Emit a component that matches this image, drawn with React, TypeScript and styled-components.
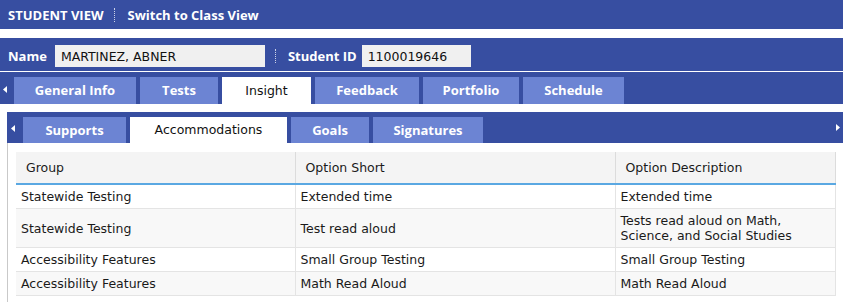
import React from 'react';
import styled, { createGlobalStyle } from 'styled-components';

const BLUE = '#374ea1';
const TAB = '#6c84d3';

const Global = createGlobalStyle`
  html, body { margin: 0; padding: 0; background: #fff; }
  body { font-family: 'DejaVu Sans', 'Noto Sans', sans-serif; font-size: 12.5px; color: #1a1a1a; }
  * { box-sizing: border-box; }
`;

const Page = styled.div`
  width: 843px;
  display: flex;
  flex-direction: column;
`;

const TopBar = styled.div`
  height: 29px;
  background: ${BLUE};
  display: flex;
  align-items: center;
  padding: 0 8px;
  color: #fff;
`;

const BarText = styled.span`
  font-family: 'Open Sans', 'DejaVu Sans', sans-serif;
  font-weight: 700;
  font-size: 13px;
  color: #fff;
  white-space: nowrap;
`;

const Dots = styled.span<{ $l: number; $r: number }>`
  display: block;
  height: 14px;
  border-left: 1px dotted rgba(255, 255, 255, 0.75);
  margin: 0 ${(p) => p.$r}px 0 ${(p) => p.$l}px;
`;

const StudentBar = styled.div`
  margin-top: 9px;
  height: 33px;
  background: ${BLUE};
  display: flex;
  align-items: center;
  padding: 3px 0 0 8px;
`;

const Field = styled.div<{ $w: number; $ml: number }>`
  width: ${(p) => p.$w}px;
  height: 22px;
  margin-left: ${(p) => p.$ml}px;
  background: #f0f0f0;
  color: #111;
  display: flex;
  align-items: center;
  padding-left: 6px;
  font-size: 12.5px;
  white-space: nowrap;
`;

const TabBar = styled.div`
  margin-top: 1px;
  height: 32px;
  background: ${BLUE};
  display: flex;
  align-items: flex-end;
  gap: 4px;
`;

const ArrowCell = styled.div<{ $w: number; $right?: boolean }>`
  width: ${(p) => p.$w}px;
  align-self: stretch;
  display: flex;
  align-items: center;
  justify-content: ${(p) => (p.$right ? 'flex-start' : 'center')};
  margin-left: ${(p) => (p.$right ? 'auto' : '0')};
  padding-top: ${(p) => (p.$right ? '0' : '2px')};
`;

const Tab = styled.div<{ $w: number; $active?: boolean; $h: number }>`
  width: ${(p) => p.$w}px;
  height: ${(p) => p.$h}px;
  background: ${(p) => (p.$active ? '#fff' : TAB)};
  color: ${(p) => (p.$active ? '#111' : '#fff')};
  font-family: ${(p) =>
    p.$active ? "'DejaVu Sans', sans-serif" : "'Open Sans', 'DejaVu Sans', sans-serif"};
  font-weight: ${(p) => (p.$active ? 400 : 700)};
  font-size: ${(p) => (p.$active ? '12.5px' : '13px')};
  display: flex;
  align-items: center;
  justify-content: center;
  white-space: nowrap;
  padding-bottom: 1px;
`;

const Panel = styled.div`
  margin: 8px 0 0 7px;
  display: flex;
  flex-direction: column;
`;

const SubBar = styled.div`
  height: 31px;
  background: ${BLUE};
  display: flex;
  align-items: flex-end;
  gap: 4px;
`;

const Content = styled.div`
  border-left: 1px solid #c9c9c9;
  padding: 9px 8px 8px 8px;
`;

const Table = styled.table`
  width: 819px;
  border-collapse: collapse;
  table-layout: fixed;
`;

const Th = styled.th`
  height: 32px;
  background: #f4f4f4;
  border-right: 1px solid #dcdcdc;
  border-bottom: 2px solid #5aa8e2;
  text-align: left;
  font-weight: 400;
  padding: 0 10px;
  color: #1a1a1a;
`;

const Tr = styled.tr<{ $alt?: boolean }>`
  background: ${(p) => (p.$alt ? '#f8f8f8' : '#fff')};
`;

const Td = styled.td`
  border-right: 1px solid #e4e4e4;
  border-bottom: 1px solid #e4e4e4;
  padding: 4px 5px 4px 5px;
  line-height: 15px;
  vertical-align: middle;
  color: #1a1a1a;
`;

const Tri = ({ dir }: { dir: 'l' | 'r' }) => (
  <svg width="4" height="7" viewBox="0 0 4 7">
    {dir === 'l' ? <path d="M4 0 L0 3.5 L4 7 Z" fill="#fff" /> : <path d="M0 0 L4 3.5 L0 7 Z" fill="#fff" />}
  </svg>
);

const mainTabs = [
  { label: 'General Info', w: 122 },
  { label: 'Tests', w: 78 },
  { label: 'Insight', w: 89, active: true },
  { label: 'Feedback', w: 104 },
  { label: 'Portfolio', w: 96 },
  { label: 'Schedule', w: 101 },
];

const subTabs = [
  { label: 'Supports', w: 103 },
  { label: 'Accommodations', w: 157, active: true },
  { label: 'Goals', w: 78 },
  { label: 'Signatures', w: 110 },
];

const rows = [
  ['Statewide Testing', 'Extended time', 'Extended time'],
  ['Statewide Testing', 'Test read aloud', 'Tests read aloud on Math, Science, and Social Studies'],
  ['Accessibility Features', 'Small Group Testing', 'Small Group Testing'],
  ['Accessibility Features', 'Math Read Aloud', 'Math Read Aloud'],
];

export default function App() {
  return (
    <Page>
      <Global />
      <TopBar>
        <BarText>STUDENT VIEW</BarText>
        <Dots $l={10} $r={13} />
        <BarText>Switch to Class View</BarText>
      </TopBar>
      <StudentBar>
        <BarText>Name</BarText>
        <Field $w={210} $ml={8}>MARTINEZ, ABNER</Field>
        <Dots $l={10} $r={12} />
        <BarText>Student ID</BarText>
        <Field $w={109} $ml={5}>1100019646</Field>
      </StudentBar>
      <TabBar>
        <ArrowCell $w={10}>
          <Tri dir="l" />
        </ArrowCell>
        {mainTabs.map((t) => (
          <Tab key={t.label} $w={t.w} $h={27} $active={t.active}>
            {t.label}
          </Tab>
        ))}
      </TabBar>
      <Panel>
        <SubBar>
          <ArrowCell $w={12}>
            <Tri dir="l" />
          </ArrowCell>
          {subTabs.map((t) => (
            <Tab key={t.label} $w={t.w} $h={26} $active={t.active}>
              {t.label}
            </Tab>
          ))}
          <ArrowCell $w={7} $right>
            <Tri dir="r" />
          </ArrowCell>
        </SubBar>
        <Content>
          <Table>
            <colgroup>
              <col style={{ width: 279 }} />
              <col style={{ width: 320 }} />
              <col style={{ width: 220 }} />
            </colgroup>
            <thead>
              <tr>
                <Th>Group</Th>
                <Th>Option Short</Th>
                <Th>Option Description</Th>
              </tr>
            </thead>
            <tbody>
              {rows.map((r, i) => (
                <Tr key={i} $alt={i % 2 === 1}>
                  {r.map((c, j) => (
                    <Td key={j}>{c}</Td>
                  ))}
                </Tr>
              ))}
            </tbody>
          </Table>
        </Content>
      </Panel>
    </Page>
  );
}
